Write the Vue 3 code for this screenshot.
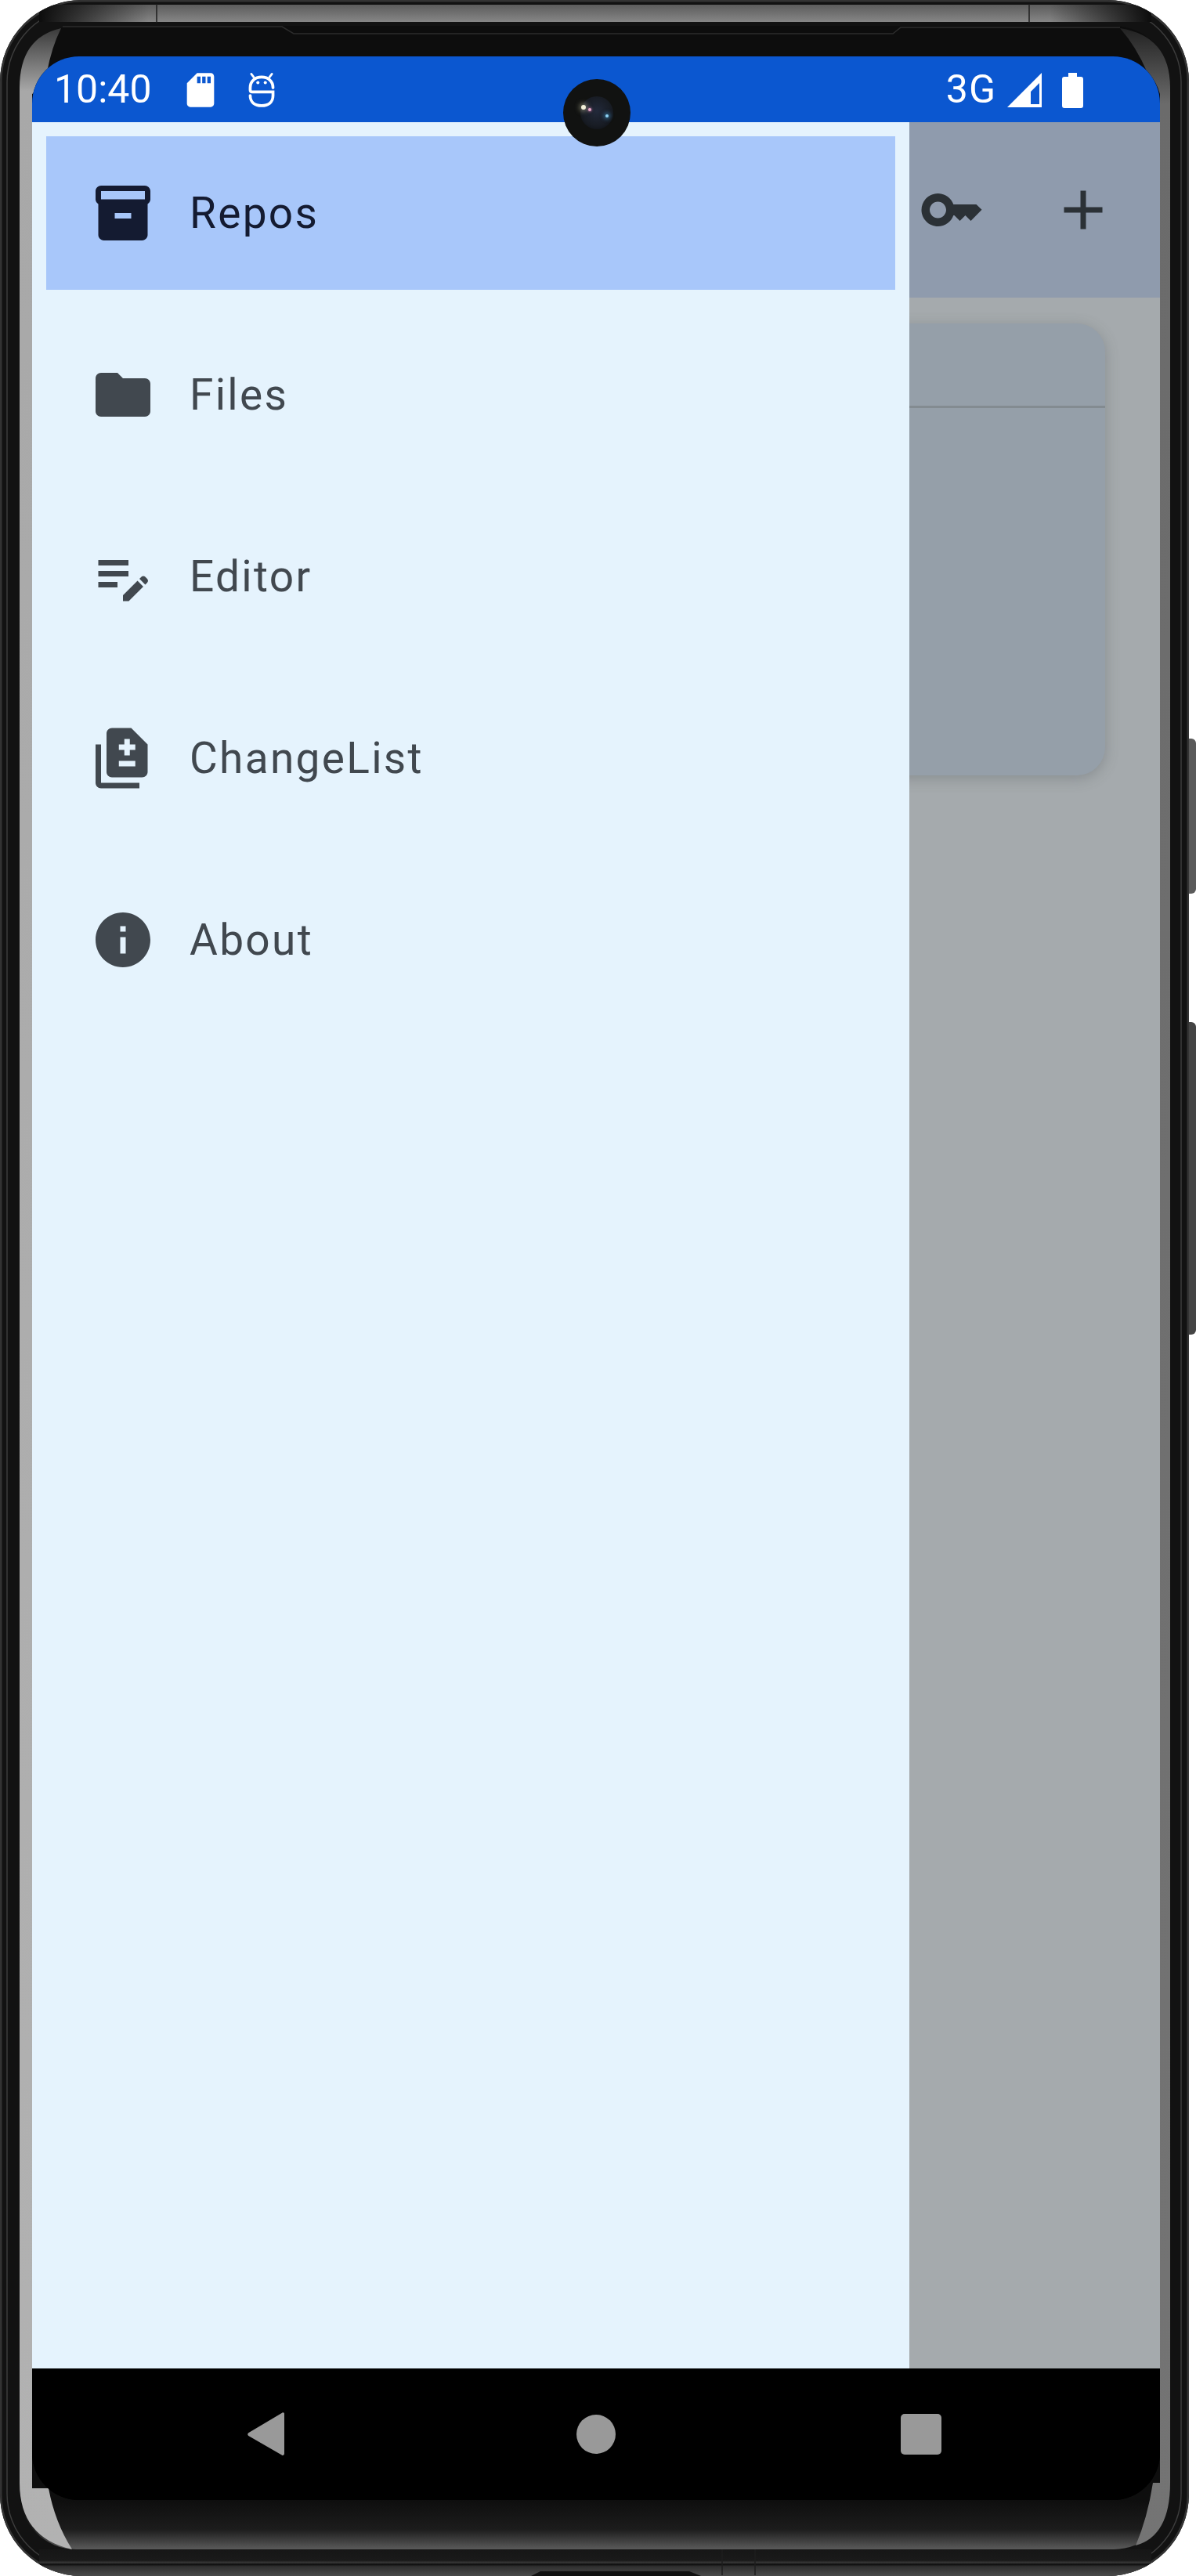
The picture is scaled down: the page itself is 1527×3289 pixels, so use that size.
<script setup>
const items = [
  { label: 'Repos', active: true, d: 'M20 2H4c-1 0-2 .9-2 2v3.01c0 .72.43 1.34 1 1.69V20c0 1.1 1.1 2 2 2h14c.9 0 2-.9 2-2V8.7c.57-.35 1-.97 1-1.69V4c0-1.1-1-2-2-2zm-5 12H9v-2h6v2zm5-7H4V4h16v3z' },
  { label: 'Files', d: 'M10 4H4c-1.1 0-1.99.9-1.99 2L2 18c0 1.1.9 2 2 2h16c1.1 0 2-.9 2-2V8c0-1.1-.9-2-2-2h-8l-2-2z' },
  { label: 'Editor', d: 'M3 10h11v2H3v-2zm0-2h11V6H3v2zm0 8h7v-2H3v2zm15.01-3.13.71-.71c.39-.39 1.02-.39 1.41 0l.71.71c.39.39.39 1.02 0 1.41l-.71.71-2.12-2.12zm-.71.71-5.3 5.3V21h2.12l5.3-5.3-2.12-2.12z' },
  { label: 'ChangeList', d: 'M18 23H4c-1.1 0-2-.9-2-2V7h2v14h14v2zM15 1H8c-1.1 0-1.99.9-1.99 2L6 17c0 1.1.89 2 1.99 2H19c1.1 0 2-.9 2-2V7l-6-6zm1.5 14h-6v-2h6v2zm0-6h-2v2h-2V9h-2V7h2V5h2v2h2v2z' },
  { label: 'About', d: 'M12 2C6.48 2 2 6.48 2 12s4.48 10 10 10 10-4.48 10-10S17.52 2 12 2zm1 15h-2v-6h2v6zm0-8h-2V7h2v2z' }
]
</script>

<template>
  <div class="device">
    <svg class="bezel" width="1527" height="3289" viewBox="0 0 1527 3289">
      <defs>
        <linearGradient id="glass" gradientUnits="userSpaceOnUse" x1="0" y1="33" x2="0" y2="3255">
          <stop offset="0" stop-color="#0d0d0d" />
          <stop offset="0.9805" stop-color="#0e0e0e" />
          <stop offset="0.992" stop-color="#1c1c1c" />
          <stop offset="1" stop-color="#5a5a5a" />
        </linearGradient>
        <linearGradient id="band" gradientUnits="userSpaceOnUse" x1="0" y1="6" x2="0" y2="28">
          <stop offset="0" stop-color="#5c5c5c" />
          <stop offset="1" stop-color="#868686" />
        </linearGradient>
        <linearGradient id="low" gradientUnits="userSpaceOnUse" x1="0" y1="3255" x2="0" y2="3289">
          <stop offset="0" stop-color="#161616" />
          <stop offset="0.42" stop-color="#1a1a1a" />
          <stop offset="0.5" stop-color="#3a3a3a" />
          <stop offset="0.56" stop-color="#0c0c0c" />
          <stop offset="0.64" stop-color="#2f2f2f" />
          <stop offset="1" stop-color="#4a4a4a" />
        </linearGradient>
        <linearGradient id="fadeL" gradientUnits="userSpaceOnUse" x1="50" y1="0" x2="190" y2="0">
          <stop offset="0" stop-color="#0c0c0c" />
          <stop offset="1" stop-color="#0c0c0c" stop-opacity="0" />
        </linearGradient>
        <linearGradient id="fadeR" gradientUnits="userSpaceOnUse" x1="1470" y1="0" x2="1340" y2="0">
          <stop offset="0" stop-color="#0c0c0c" />
          <stop offset="1" stop-color="#0c0c0c" stop-opacity="0" />
        </linearGradient>
        <linearGradient id="leftStrip" gradientUnits="userSpaceOnUse" x1="0" y1="36" x2="0" y2="3255">
          <stop offset="0" stop-color="#3a3a3a" />
          <stop offset="0.025" stop-color="#a8a8a8" />
          <stop offset="1" stop-color="#b2b2b2" />
        </linearGradient>
        <linearGradient id="rightStrip" gradientUnits="userSpaceOnUse" x1="0" y1="36" x2="0" y2="3255">
          <stop offset="0" stop-color="#222" />
          <stop offset="0.03" stop-color="#6b6b6b" />
          <stop offset="1" stop-color="#747474" />
        </linearGradient>
        <clipPath id="body"><rect x="0" y="0" width="1518" height="3289" rx="104" /></clipPath>
      </defs>

      <rect x="1512" y="943" width="15" height="198" rx="6" fill="#5a5a5a" />
      <rect x="1512" y="1305" width="15" height="399" rx="6" fill="#444" />

      <rect x="0" y="0" width="1518" height="3289" rx="104" fill="#121212" />
      <g clip-path="url(#body)">
        <rect x="1" y="1" width="1516" height="3287" rx="103" fill="none" stroke="#333" stroke-width="3" />
        <rect x="9" y="10" width="1499" height="3269" rx="95" fill="none" stroke="#3c3c3c" stroke-width="1.5" />
        <rect x="50" y="6" width="1420" height="22" fill="url(#band)" />
        <rect x="50" y="6" width="140" height="22" fill="url(#fadeL)" />
        <rect x="1340" y="6" width="130" height="22" fill="url(#fadeR)" />
        <rect x="50" y="3255" width="1420" height="34" fill="url(#low)" />
        <path d="M200 5V29M1314 5V29M922 3255V3288M964 3255V3288" stroke="#1e1e1e" stroke-width="1.5" />
        <path d="M678 3289L690 3283H880L895 3289Z" fill="#111" />
      </g>

      <rect x="25" y="33" width="1469" height="3222" rx="72" fill="url(#glass)" />
      <path d="M78 36Q25 48 25 112V3170Q25 3240 92 3255Q70 3220 62 3177H41V120Q56 112 60 92Q66 60 78 36Z" fill="url(#leftStrip)" />
      <path d="M1430 36Q1494 46 1494 112V3170Q1494 3238 1450 3250Q1465 3215 1472 3170H1481V120Q1477 104 1465 93Q1451 60 1430 36Z" fill="url(#rightStrip)" />
      <path d="M80 34H360L375 43H1140L1150 35H1430" fill="none" stroke="#2c2c2c" stroke-width="1.5" />
    </svg>

    <div class="screen">
      <div class="status">
        <span class="time">10:40</span>
        <svg class="s-sd" width="52" height="52" viewBox="0 0 24 24"><path fill="#fff" d="M18 2h-8L4.02 8 4 20c0 1.1.9 2 2 2h12c1.1 0 2-.9 2-2V4c0-1.1-.9-2-2-2zm-6 6h-2V4h2v4zm3 0h-2V4h2v4zm3 0h-2V4h2v4z" /></svg>
        <svg class="s-adb" width="34" height="46" viewBox="950 278 100 136" fill="none" stroke="#fff" stroke-width="11" stroke-linecap="round">
          <path d="M1043 337C1043 312 1025 297 1000 297C975 297 957 312 957 337V346Q957 353 965 353H1043V367C1043 392 1025 405 1000 405C975 405 957 392 957 367" />
          <path d="M961 285L970 297M1039 285L1030 297" stroke-width="8" />
          <circle cx="986" cy="318" r="6" fill="#fff" stroke="none" />
          <circle cx="1014" cy="318" r="6" fill="#fff" stroke="none" />
        </svg>
        <span class="net">3G</span>
        <svg class="s-sig" width="44" height="44" viewBox="0 0 44 44"><path fill="#fff" fill-rule="evenodd" d="M0 44L44 0V44ZM30 24V40H41V13Z" /></svg>
        <svg class="s-bat" width="27" height="45" viewBox="0 0 27 45"><path fill="#fff" d="M8 0H19V5H24Q27 5 27 8V42Q27 45 24 45H3Q0 45 0 42V8Q0 5 3 5H8Z" /></svg>
      </div>

      <div class="camera">
        <div class="lens">
          <i class="glint g1"></i><i class="glint g2"></i><i class="glint g3"></i>
        </div>
      </div>

      <div class="body">
        <nav class="drawer">
          <div v-for="item in items" :key="item.label" class="item" :class="{ active: item.active }">
            <svg class="item-icon" width="84" height="84" viewBox="0 0 24 24"><path :d="item.d" fill="currentColor" /></svg>
            <span class="label">{{ item.label }}</span>
          </div>
        </nav>
        <main class="behind">
          <header class="appbar">
            <svg width="84" height="84" viewBox="0 0 24 24"><path fill="currentColor" d="M21 10h-8.35C11.83 7.67 9.61 6 7 6c-3.31 0-6 2.69-6 6s2.69 6 6 6c2.61 0 4.83-1.67 5.65-4H13l2 2 2-2 2 2 4-4.04L21 10zM7 15c-1.65 0-3-1.35-3-3s1.35-3 3-3 3 1.35 3 3-1.35 3-3 3z" /></svg>
            <svg width="84" height="84" viewBox="0 0 24 24"><path fill="currentColor" d="M19 13h-6v6h-2v-6H5v-2h6V5h2v6h6v2z" /></svg>
          </header>
          <section class="card">
            <div class="card-head"></div>
          </section>
        </main>
      </div>

      <footer class="navbar">
        <svg width="56" height="56" viewBox="0 0 56 56"><path fill="#999" d="M47 1.5V53a2 2 0 0 1-3.3 1.4L1.2 30a2.6 2.6 0 0 1 0-3.8L43.7 1a2 2 0 0 1 3.3.5Z" /></svg>
        <span class="home"></span>
        <span class="recent"></span>
      </footer>
    </div>
  </div>
</template>

<style scoped>
.device {
  position: relative;
  width: 1527px;
  height: 3289px;
  box-sizing: border-box;
  padding: 72px 46px 0 41px;
  font-family: Roboto, "Liberation Sans", sans-serif;
}
.bezel {
  position: absolute;
  left: 0;
  top: 0;
}
.screen {
  position: relative;
  width: 1440px;
  height: 3120px;
  border-radius: 60px;
  overflow: hidden;
  display: flex;
  flex-direction: column;
  background: #000;
}
.status {
  height: 84px;
  flex: none;
  background: #0b57d0;
  color: #fff;
  display: flex;
  align-items: center;
  padding: 0 98px 0 28px;
  box-sizing: border-box;
}
.time {
  font-size: 50px;
  line-height: 84px;
  width: 161px;
  flex: none;
}
.s-sd { margin-top: 2px; flex: none; }
.s-adb { margin-left: 35px; margin-top: 2px; flex: none; }
.net {
  margin-left: auto;
  font-size: 50px;
  line-height: 84px;
  letter-spacing: 1px;
}
.s-sig { margin-left: 14px; margin-top: 2px; flex: none; }
.s-bat { margin-left: 26px; margin-top: 2px; flex: none; }
.camera {
  position: absolute;
  z-index: 2;
  left: 678px;
  top: 29px;
  width: 86px;
  height: 86px;
  border-radius: 50%;
  background: #111211;
  display: flex;
  align-items: center;
  justify-content: center;
}
.lens {
  position: relative;
  width: 42px;
  height: 42px;
  border-radius: 50%;
  background: radial-gradient(circle at 50% 45%, #22293a 0%, #181c24 60%, #0a0c0e 100%);
}
.glint {
  position: absolute;
  border-radius: 50%;
}
.g1 { left: 1px; top: 11px; width: 6px; height: 6px; background: #f2f0d8; box-shadow: 0 0 6px 2px rgba(230, 230, 190, 0.5); }
.g2 { left: 10px; top: 15px; width: 4px; height: 4px; background: #e9a9c8; box-shadow: 0 0 3px 1px rgba(200, 120, 170, 0.5); }
.g3 { left: 32px; top: 23px; width: 4px; height: 4px; background: #8fd4f5; box-shadow: 0 0 5px 2px rgba(70, 170, 230, 0.5); }
.body {
  flex: 1;
  min-height: 0;
  display: flex;
}
.drawer {
  position: relative;
  z-index: 1;
  width: 1120px;
  flex: none;
  box-sizing: border-box;
  background: #e5f3fd;
  padding: 18px;
  display: flex;
  flex-direction: column;
  gap: 36px;
}
.item {
  height: 196px;
  flex: none;
  display: flex;
  align-items: center;
  padding-left: 56px;
  color: #41484f;
}
.item.active {
  background: #a8c7fa;
  color: #141b31;
}
.item-icon { flex: none; }
.label {
  margin-left: 43px;
  font-size: 55px;
  letter-spacing: 2.3px;
  line-height: 1;
}
.behind {
  flex: 1;
  min-width: 0;
  background: #a5aaad;
}
.appbar {
  height: 224px;
  box-sizing: border-box;
  background: #8f9bad;
  color: #2b3136;
  display: flex;
  align-items: center;
  padding: 0 0 0 12px;
  gap: 84px;
}
.card {
  margin: 33px 70px 0 -40px;
  height: 577px;
  background: #959fa9;
  border-radius: 36px;
  box-shadow: 0 4px 18px rgba(70, 75, 80, 0.3);
}
.card-head {
  height: 105px;
  border-bottom: 3px solid #838b91;
}
.navbar {
  height: 168px;
  flex: none;
  background: #000;
  display: flex;
  align-items: center;
  gap: 364px;
  padding-left: 275px;
}
.navbar svg { flex: none; }
.home {
  width: 50px;
  height: 50px;
  border-radius: 50%;
  background: #999;
  flex: none;
}
.recent {
  width: 52px;
  height: 52px;
  border-radius: 5px;
  background: #999;
  flex: none;
}
</style>

<style>
body { background: #fff; }
</style>
